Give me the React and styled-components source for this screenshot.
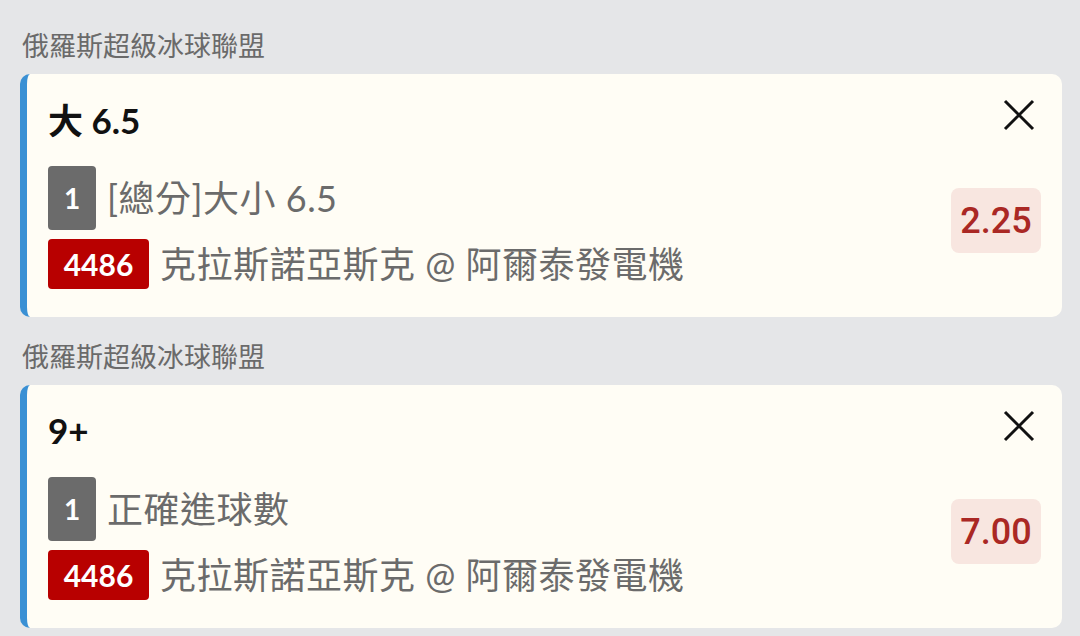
import React from "react";
import styled, { createGlobalStyle } from "styled-components";

const GlobalStyle = createGlobalStyle`
  html, body {
    margin: 0;
    padding: 0;
    background: #e5e6e8;
    font-family: Lato, "Noto Sans CJK TC", sans-serif;
  }
`;

const Page = styled.div`
  padding: 27px 18px 0 20px;
  display: flex;
  flex-direction: column;
`;

const League = styled.div`
  font-size: 27px;
  line-height: 37px;
  color: #6a6a6a;
  padding-left: 2px;
  margin-bottom: 10px;
`;

const Card = styled.div`
  background: #fffdf5;
  border-left: 7px solid #3a90d4;
  border-radius: 10px;
  padding: 22px 21px 28px 21px;
  margin-bottom: 21px;
  display: flex;
  flex-direction: column;
`;

const Head = styled.div`
  display: flex;
  align-items: center;
  justify-content: space-between;
  height: 50px;
`;

const Title = styled.div`
  font-family: Lato, "Noto Sans CJK TC", sans-serif;
  font-weight: 700;
  font-size: 35px;
  color: #111;
  margin-top: -5px;
`;

const Close = styled.button`
  border: 0;
  background: none;
  padding: 0;
  margin-right: 6px;
  width: 32px;
  height: 32px;
  display: flex;
  align-items: center;
  justify-content: center;
  margin-top: -12px;
`;

const Body = styled.div`
  display: flex;
  align-items: center;
  justify-content: space-between;
  margin-top: 20px;
`;

const Lines = styled.div`
  display: flex;
  flex-direction: column;
  gap: 9px;
`;

const Line = styled.div`
  display: flex;
  align-items: center;
  gap: 11px;
`;

const Badge = styled.span`
  display: inline-flex;
  align-items: center;
  justify-content: center;
  background: ${(p) => p.$bg};
  color: #fff;
  font-family: Lato, sans-serif;
  font-weight: 700;
  font-size: ${(p) => (p.$wide ? "30px" : "28px")};
  height: ${(p) => (p.$wide ? "50px" : "64px")};
  width: ${(p) => (p.$wide ? "101px" : "48px")};
  box-sizing: border-box;
  border-radius: 4px;
`;

const Text = styled.span`
  font-family: Lato, "Noto Sans CJK TC", sans-serif;
  font-size: 36px;
  color: #6b6b6b;
  letter-spacing: 0.5px;
  line-height: 48px;
`;

const Odds = styled.div`
  background: #f8e6e0;
  color: #aa2824;
  font-family: Roboto, sans-serif;
  font-weight: 500;
  font-size: 36px;
  width: 90px;
  height: 65px;
  border-radius: 8px;
  display: flex;
  align-items: center;
  justify-content: center;
  margin-bottom: 14px;
`;

const XIcon = () => (
  <svg width="32" height="32" viewBox="0 0 32 32">
    <path d="M2 2 L30 30 M30 2 L2 30" stroke="#111" strokeWidth="3" fill="none" />
  </svg>
);

const bets = [
  { title: "大 6.5", market: "[總分]大小 6.5", odds: "2.25" },
  { title: "9+", market: "正確進球數", odds: "7.00" },
];

export default function App() {
  return (
    <>
      <GlobalStyle />
      <Page>
        {bets.map((b, i) => (
          <div key={i}>
            <League>俄羅斯超級冰球聯盟</League>
            <Card>
              <Head>
                <Title>{b.title}</Title>
                <Close>
                  <XIcon />
                </Close>
              </Head>
              <Body>
                <Lines>
                  <Line>
                    <Badge $bg="#6b6b6b">1</Badge>
                    <Text>{b.market}</Text>
                  </Line>
                  <Line>
                    <Badge $bg="#b80000" $wide>4486</Badge>
                    <Text>克拉斯諾亞斯克 @ 阿爾泰發電機</Text>
                  </Line>
                </Lines>
                <Odds>{b.odds}</Odds>
              </Body>
            </Card>
          </div>
        ))}
      </Page>
    </>
  );
}
